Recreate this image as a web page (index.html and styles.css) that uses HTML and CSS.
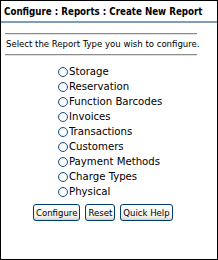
FILE: index.html
```html
<!DOCTYPE html>
<html>
<head>
<meta charset="utf-8">
<link rel="stylesheet" href="styles.css">
</head>
<body>
<div class="frame">
  <div class="title">Configure : Reports : Create New Report</div>
  <div class="intro">
    <div class="rule"></div>
    <div class="prompt">Select the Report Type you wish to configure.</div>
    <div class="rule"></div>
  </div>
  <ul class="options">
    <li><span class="radio"></span>Storage</li>
    <li><span class="radio"></span>Reservation</li>
    <li><span class="radio"></span>Function Barcodes</li>
    <li><span class="radio"></span>Invoices</li>
    <li><span class="radio"></span>Transactions</li>
    <li><span class="radio"></span>Customers</li>
    <li><span class="radio"></span>Payment Methods</li>
    <li><span class="radio"></span>Charge Types</li>
    <li><span class="radio"></span>Physical</li>
  </ul>
  <div class="actions">
    <button class="btn">Configure</button>
    <button class="btn">Reset</button>
    <button class="btn">Quick Help</button>
  </div>
</div>
</body>
</html>
```
FILE: styles.css
```css
html, body { margin: 0; padding: 0; background: #fff; }
.frame {
  box-sizing: border-box;
  width: 218px;
  height: 260px;
  border: 1px solid #000;
  font-family: "DejaVu Sans Condensed", "DejaVu Sans", sans-serif;
  font-stretch: condensed;
  font-size: 9.5px;
  color: #000;
  white-space: nowrap;
}
.title {
  font-weight: bold;
  font-size: 9.7px;
  padding: 5px 3px 3px;
  border-bottom: 2px solid #7f9db9;
  line-height: 12px;
}
.intro { padding: 10px 0 0 4px; width: 192px; }
.rule { border-top: 1px solid #8c8c8c; border-bottom: 1px solid #e0e0e0; }
.prompt { padding: 3px 0 4px 1px; line-height: 12px; }
.options { list-style: none; margin: 8px 0 0 57px; padding: 0; font-size: 11.3px; }
.options li { display: flex; align-items: center; height: 15.1px; line-height: 12px; }
.radio {
  box-sizing: border-box;
  width: 10px; height: 10px;
  border: 1px solid #1c5180;
  border-radius: 50%;
  background: radial-gradient(circle at 60% 60%, #fff 30%, #e2e2dd 100%);
  margin-right: 1px;
}
.actions { display: flex; gap: 5px; margin: 4px 0 0 32px; }
.btn {
  font-family: inherit;
  font-stretch: condensed;
  font-size: 9.5px;
  height: 17px;
  padding: 0 2px;
  border: 1px solid #003c74;
  border-radius: 3px;
  background: linear-gradient(#fff, #f0f0ea 80%, #d6d0c5);
  color: #000;
}
```
